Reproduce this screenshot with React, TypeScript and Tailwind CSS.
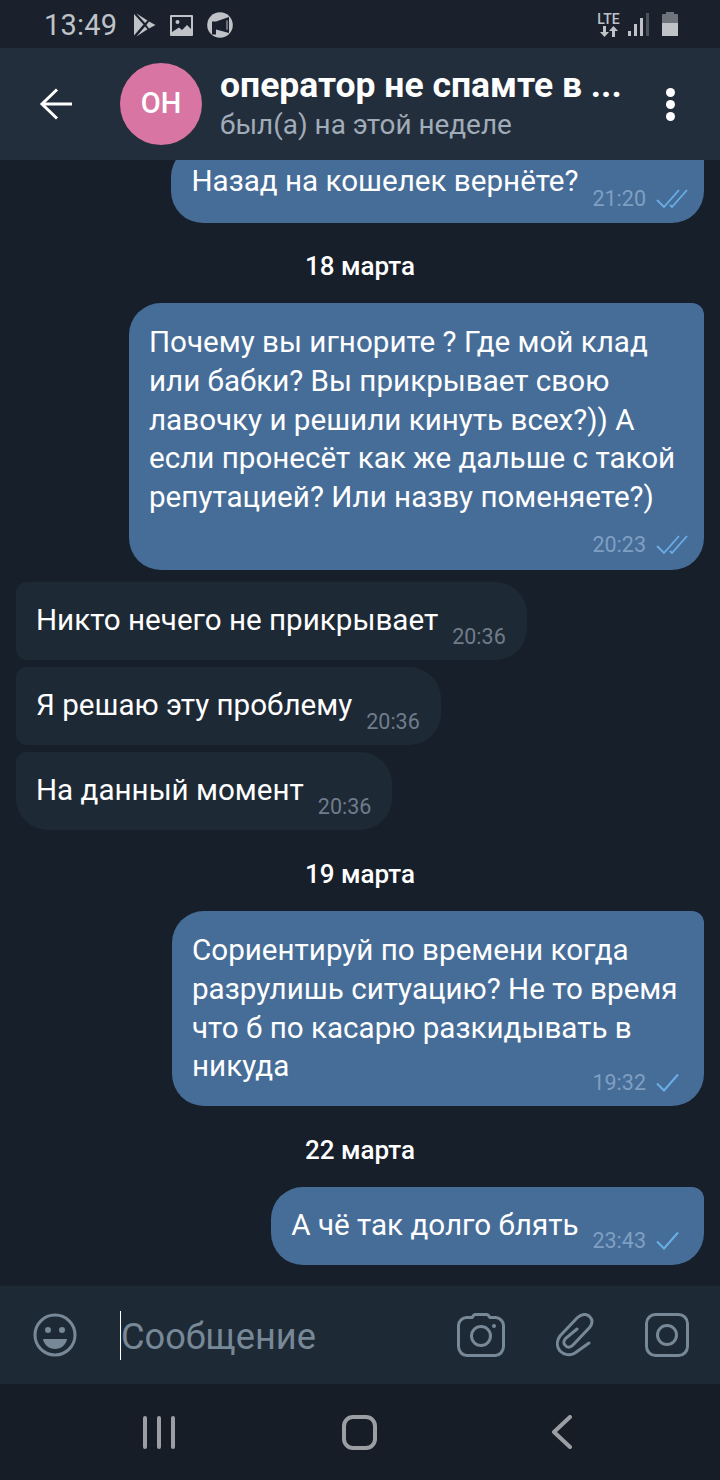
const FONT = "font-['Roboto',sans-serif]";

function DoubleCheck() {
  return (
    <svg width="32" height="22" viewBox="0 0 32 22" fill="none" stroke="#6aaee8" strokeWidth="1.8" className="shrink-0">
      <path d="M1 12l7 7L23 2" />
      <path d="M14 17l2 2L31 2" />
    </svg>
  );
}

function SingleCheck() {
  return (
    <div className="w-8 shrink-0">
      <svg width="23" height="20" viewBox="0 0 23 20" fill="none" stroke="#6aaee8" strokeWidth="2">
        <path d="M1 10.500l7 7L22 1.500" />
      </svg>
    </div>
  );
}

function StatusBar() {
  return (
    <div className="h-12 shrink-0 bg-[#1a212d] flex items-center pl-11 pr-[42px] text-[#bfc3c8]">
      <span className="text-[29px] leading-none tracking-[0.2px] mt-[2px]">13:49</span>
      <div className="flex items-center ml-[17px] mt-[2px]">
        <svg width="22" height="24" viewBox="0 0 22 24" fill="#bfc3c8">
          <path d="M0 1l9.500 10.500L0 22.500z" />
          <path d="M2.500 0.500l11 7-2.500 2.500z" />
          <path d="M2.500 23.500l8.500-10 2.500 2.800z" />
          <path d="M15 8.500l6.500 3.500-6.500 3.600-2.600-3.600z" />
        </svg>
        <svg width="23" height="21" viewBox="0 0 23 21" className="ml-[14px]">
          <rect width="23" height="21" rx="1" fill="#bfc3c8" />
          <path fill="#1a212d" d="M2 2h19v12l-4-4-5 5-3-2.500L2 17z" />
          <circle cx="7.500" cy="7" r="2" fill="#bfc3c8" />
        </svg>
        <svg width="26" height="26" viewBox="0 0 26 26" className="ml-[14px]">
          <circle cx="13" cy="13" r="12.800" fill="#bfc3c8" />
          <path fill="#1a212d" d="M5 9.500h4L22 5v16L9 17.500v5H5z" />
          <path fill="#bfc3c8" d="M19.500 8.500l1-.3v9.600l-1-.3z" />
        </svg>
      </div>
      <div className="ml-auto flex items-center">
        <div className="flex flex-col items-center w-[23px]">
          <span className="text-[14px] leading-[14px] font-medium">LTE</span>
          <svg width="18" height="11" viewBox="0 0 18 11" fill="#bfc3c8">
            <path d="M3 0h3v6h3L4.500 11 0 6h3z" />
            <path d="M12 11h3V5h3L13.500 0 9 5h3z" />
          </svg>
        </div>
        <div className="flex items-end gap-[3px] h-[23px] ml-2">
          <div className="w-[3px] h-[5px] bg-[#bfc3c8]" />
          <div className="w-[3px] h-[12px] bg-[#bfc3c8]" />
          <div className="w-[3px] h-[18px] bg-[#bfc3c8]" />
          <div className="w-[3px] h-[23px] bg-[#4a525c]" />
        </div>
        <div className="w-4 h-6 ml-[13px] flex flex-col items-center">
          <div className="w-2 h-[2px] bg-[#6e747c]" />
          <div className="w-4 h-[9px] bg-[#6e747c] rounded-t-[1px]" />
          <div className="w-4 h-[13px] bg-[#bfc3c8]" />
        </div>
      </div>
    </div>
  );
}

function Header() {
  return (
    <div className="h-28 shrink-0 bg-[#232e3c] flex items-center">
      <svg width="34" height="32" viewBox="0 0 34 32" fill="none" stroke="#ffffff" strokeWidth="3" className="ml-[39px] shrink-0">
        <path d="M33 16H3" />
        <path d="M18 1.500L3 16l15 14.500" />
      </svg>
      <div className="ml-[47px] w-[82px] h-[82px] rounded-full bg-[#d975a3] flex items-center justify-center text-white text-[29px] font-medium shrink-0">
        ОН
      </div>
      <div className="ml-[18px] flex-1 min-w-0 pb-[2px]">
        <div className="text-white text-[35.500px] leading-[40px] font-bold whitespace-nowrap">оператор не спамте в ...</div>
        <div className="text-[#a0acb8] text-[27.900px] leading-[32px] mt-[4px]">был(а) на этой неделе</div>
      </div>
      <div className="flex flex-col gap-[3px] mr-[45px] shrink-0">
        <div className="w-[9px] h-[9px] rounded-full bg-white" />
        <div className="w-[9px] h-[9px] rounded-full bg-white" />
        <div className="w-[9px] h-[9px] rounded-full bg-white" />
      </div>
    </div>
  );
}

function DateLabel({ text, className }: { text: string; className: string }) {
  return <div className={`text-center text-white text-[26px] leading-[30px] font-medium ${className}`}>{text}</div>;
}

type OutProps = { lines: string[]; time: string; read: boolean; className?: string; metaClass?: string; textClass?: string };

function OutBubble({ lines, time, read, className, metaClass, textClass }: OutProps) {
  const single = lines.length === 1;
  const meta = (
    <div className={`flex items-center justify-end gap-[10px] ${single ? "ml-[14px] mb-[12px]" : metaClass}`}>
      <span className="text-[21.500px] leading-6 text-[#7f9fc2]">{time}</span>
      {read ? <DoubleCheck /> : <SingleCheck />}
    </div>
  );
  return (
    <div className={`self-end mr-4 bg-[#466d98] rounded-[32px] rounded-tr-[12px] pl-5 pr-4 ${single ? "flex items-end pt-[19px] h-[78px]" : "pt-5"} ${className ?? ""}`}>
      <div className={`text-white text-[29.600px] leading-[38.800px] whitespace-nowrap mb-auto ${textClass ?? ""}`}>
        {lines.map((l) => (
          <div key={l}>{l}</div>
        ))}
      </div>
      {meta}
    </div>
  );
}

function InBubble({ text, time, className }: { text: string; time: string; className?: string }) {
  return (
    <div className={`self-start ml-4 h-[78px] bg-[#1e2936] rounded-l-[11px] rounded-r-[32px] flex items-end pl-5 pr-[21px] pt-[19px] ${className ?? ""}`}>
      <div className="text-white text-[29.600px] leading-[38.800px] whitespace-nowrap mb-auto">{text}</div>
      <span className="ml-[14px] mb-[11px] text-[21.500px] leading-6 text-[#6f7c8a]">{time}</span>
    </div>
  );
}

function InputBar() {
  return (
    <div className="h-[98px] shrink-0 bg-[#1e2936] flex items-center text-[#778896]">
      <svg width="44" height="44" viewBox="0 0 44 44" fill="none" className="ml-[33px] shrink-0">
        <circle cx="22" cy="22" r="20" stroke="#778896" strokeWidth="3" />
        <circle cx="15" cy="17" r="3" fill="#778896" />
        <circle cx="29" cy="17" r="3" fill="#778896" />
        <path d="M10 26h24c-1 6-6 10-12 10s-11-4-12-10z" fill="#778896" />
      </svg>
      <div className="w-px h-[49px] bg-white ml-[43px] shrink-0" />
      <span className="text-[36.200px] leading-none mt-1">Сообщение</span>
      <svg width="48" height="44" viewBox="0 0 48 44" fill="none" stroke="#778896" strokeWidth="3" className="ml-auto shrink-0">
        <path d="M15 4.500l2-2.500c.5-.5 1-.5 1.500-.5h11c.5 0 1 0 1.500.5l2 2.500h5.500c4 0 8 3.500 8 8v21c0 5-4 9-8 9H9.500c-4 0-8-4-8-9v-21c0-4.500 4-8 8-8z" />
        <circle cx="24" cy="23" r="9.500" />
        <circle cx="37" cy="13" r="2" fill="#778896" stroke="none" />
      </svg>
      <svg width="38" height="44" viewBox="0 0 38 44" fill="none" stroke="#778896" strokeWidth="3" strokeLinecap="round" className="ml-[51px] shrink-0">
        <path d="M33 30L19 40c-5 3-11 2-15-2-4-5-3-11 0-15L21 5c4-4 10-5 13-1 3 3 2 7 0 10L17 32c-3 3-6 3-8 0-2-2-1-5 1-7l11-9" />
      </svg>
      <svg width="44" height="44" viewBox="0 0 44 44" fill="none" stroke="#778896" strokeWidth="3" className="ml-[51px] mr-[31px] shrink-0">
        <rect x="1.500" y="1.500" width="41" height="41" rx="9" />
        <circle cx="22" cy="22" r="9.500" />
      </svg>
    </div>
  );
}

function NavBar() {
  return (
    <div className="h-24 shrink-0 bg-[#161d26] flex items-center">
      <div className="flex gap-[10px] ml-[143px] shrink-0">
        <div className="w-[4px] h-[33px] rounded-full bg-[#9b9fa4]" />
        <div className="w-[4px] h-[33px] rounded-full bg-[#9b9fa4]" />
        <div className="w-[4px] h-[33px] rounded-full bg-[#9b9fa4]" />
      </div>
      <div className="w-[35px] h-[35px] rounded-[11px] border-[4px] border-[#9b9fa4] ml-[167px] shrink-0" />
      <svg width="20" height="34" viewBox="0 0 20 34" fill="none" stroke="#9b9fa4" strokeWidth="4" strokeLinecap="round" strokeLinejoin="round" className="ml-[175px] shrink-0">
        <path d="M18 2L2 17l16 15" />
      </svg>
    </div>
  );
}

export default function App() {
  return (
    <div className={`w-[720px] h-[1480px] flex flex-col overflow-hidden bg-[#17202a] ${FONT}`}>
      <StatusBar />
      <Header />
      <div className="flex-1 min-h-0 flex flex-col overflow-hidden">
        <div className="flex flex-col -mt-[15px]">
          <OutBubble lines={["Назад на кошелек вернёте?"]} time="21:20" read textClass="-mt-[2px]" />
          <DateLabel text="18 марта" className="mt-[28px]" />
          <OutBubble
            className="mt-[22px] w-[575px]"
            metaClass="mt-4 pb-[13px]"
            lines={[
              "Почему вы игнорите ? Где мой клад",
              "или бабки? Вы прикрывает свою",
              "лавочку и решили кинуть всех?)) А",
              "если пронесёт как же дальше с такой",
              "репутацией? Или назву поменяете?)",
            ]}
            time="20:23"
            read
          />
          <InBubble className="mt-3" text="Никто нечего не прикрывает" time="20:36" />
          <InBubble className="mt-[7px]" text="Я решаю эту проблему" time="20:36" />
          <InBubble className="mt-[7px] rounded-bl-[32px]" text="На данный момент" time="20:36" />
          <DateLabel text="19 марта" className="mt-[29px]" />
          <OutBubble
            className="mt-[22px] w-[532px]"
            metaClass="-mt-[15px] pb-[11px]"
            lines={[
              "Сориентируй по времени когда",
              "разрулишь ситуацию? Не то время",
              "что б по касарю разкидывать в",
              "никуда",
            ]}
            time="19:32"
            read={false}
          />
          <DateLabel text="22 марта" className="mt-[29px]" />
          <OutBubble className="mt-[22px]" lines={["А чё так долго блять"]} time="23:43" read={false} />
        </div>
      </div>
      <InputBar />
      <NavBar />
    </div>
  );
}
